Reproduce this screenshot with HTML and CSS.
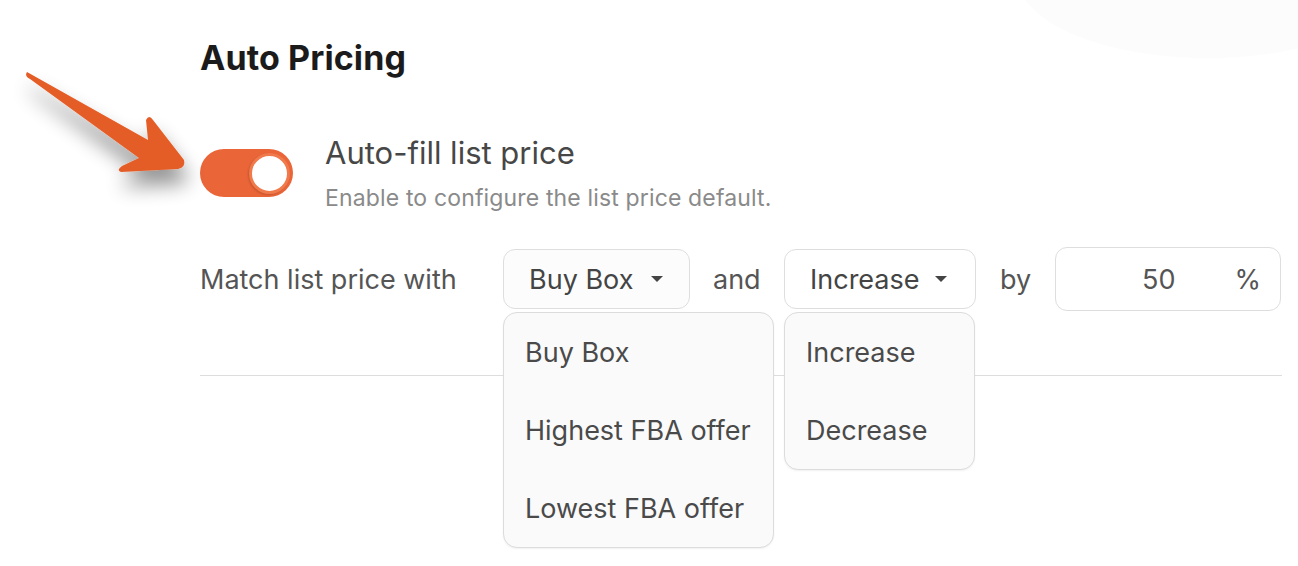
FILE: index.html
```html
<!DOCTYPE html>
<html>
<head>
<meta charset="utf-8">
<link rel="stylesheet" href="styles.css">
</head>
<body>
<div class="blob-clip"><div class="blob"></div></div>
<svg class="arrow" width="230" height="240" viewBox="0 0 230 240">
  <defs>
    <filter id="sh" x="-40%" y="-40%" width="180%" height="180%">
      <feGaussianBlur in="SourceAlpha" stdDeviation="10"/>
      <feOffset dx="3" dy="15" result="b"/>
      <feComponentTransfer><feFuncA type="linear" slope="0.42"/></feComponentTransfer>
      <feMerge><feMergeNode/><feMergeNode in="SourceGraphic"/></feMerge>
    </filter>
  </defs>
  <path filter="url(#sh)" fill="#e55d26" d="M 27 72 Q 24 76 30 79 L 139 158 L 122 166 Q 116 170 121 172 L 178 169 Q 186 167 184 160 L 153 120 Q 149 114 146 120 L 148 140 Z"/>
</svg>
<main class="page">
  <h1 class="title">Auto Pricing</h1>
  <div class="toggle-row">
    <div class="toggle"><div class="knob"></div></div>
    <div class="toggle-text">
      <div class="toggle-label">Auto-fill list price</div>
      <div class="toggle-desc">Enable to configure the list price default.</div>
    </div>
  </div>
  <div class="match-row">
    <span class="label">Match list price with</span>
    <div class="select-wrap">
      <div class="select sel-source">Buy Box <span class="caret"></span></div>
      <ul class="menu menu-source">
        <li>Buy Box</li>
        <li>Highest FBA offer</li>
        <li>Lowest FBA offer</li>
      </ul>
    </div>
    <span class="word word-and">and</span>
    <div class="select-wrap">
      <div class="select sel-dir">Increase <span class="caret"></span></div>
      <ul class="menu menu-dir">
        <li>Increase</li>
        <li>Decrease</li>
      </ul>
    </div>
    <span class="word word-by">by</span>
    <div class="amount"><span class="num">50</span><span class="pct">%</span></div>
  </div>
  <hr class="divider">
</main>
</body>
</html>
```
FILE: styles.css
```css
html {
  overflow: hidden;
}
html, body {
  margin: 0;
  padding: 0;
  background: #ffffff;
  font-family: Inter, "Noto Sans", sans-serif;
}
body {
  min-height: 566px;
}
.blob-clip {
  position: absolute;
  top: 0;
  left: 1000px;
  width: 298px;
  height: 70px;
  overflow: hidden;
}
.blob {
  width: 380px;
  height: 160px;
  margin: -102px 0 0 18px;
  border-radius: 50%;
  background: #fcfcfc;
}
.arrow {
  position: absolute;
  left: 0;
  top: 0;
  z-index: 2;
}
.page {
  position: relative;
  padding: 37px 16px 0 200px;
}
.title {
  margin: 0;
  font-size: 34px;
  font-weight: 700;
  line-height: 42px;
  color: #1b1b1b;
  letter-spacing: 0.1px;
}
.toggle-row {
  display: flex;
  gap: 32px;
  margin-top: 56px;
  align-items: flex-start;
}
.toggle {
  width: 93px;
  height: 48px;
  border-radius: 24px;
  background: #ea6538;
  display: flex;
  align-items: center;
  justify-content: flex-end;
  padding-right: 3px;
  box-sizing: border-box;
  margin-top: 14px;
  flex-shrink: 0;
}
.knob {
  width: 35px;
  height: 35px;
  border-radius: 50%;
  background: #fff;
  border: 3px solid #f07a4c;
  box-shadow: -1px 1px 2px rgba(0,0,0,0.15);
}
.toggle-label {
  font-size: 31px;
  line-height: 36px;
  color: #474747;
}
.toggle-desc {
  font-size: 23px;
  line-height: 28px;
  color: #8a8a8a;
  margin-top: 13px;
  letter-spacing: 0.15px;
}
.match-row {
  display: flex;
  align-items: center;
  margin-top: 35px;
  font-size: 27px;
  color: #555;
}
.label {
  width: 303px;
  flex-shrink: 0;
}
.select-wrap {
  position: relative;
}
.select {
  height: 60px;
  box-sizing: border-box;
  border: 1px solid #dedede;
  border-radius: 12px;
  display: flex;
  align-items: center;
  padding: 0 26px 0 25px;
  color: #444;
  background: #fff;
}
.sel-source { width: 187px; background: #fcfcfc; }
.sel-dir { width: 192px; padding-right: 28px; }
.caret {
  margin-left: auto;
  width: 0;
  height: 0;
  border-left: 6px solid transparent;
  border-right: 6px solid transparent;
  border-top: 6px solid #444;
}
.menu {
  position: absolute;
  left: 0;
  top: calc(100% + 3px);
  margin: 0;
  padding: 0;
  list-style: none;
  background: #fafafa;
  border: 1px solid #dcdcdc;
  border-radius: 14px;
  box-shadow: 0 1px 2px rgba(0,0,0,0.06);
  z-index: 3;
}
.menu li {
  height: 78px;
  display: flex;
  align-items: center;
  padding: 0 21px;
  color: #4a4a4a;
  white-space: nowrap;
}
.menu-source { width: 271px; box-sizing: border-box; }
.menu-dir { width: 191px; box-sizing: border-box; }
.word {
  color: #555;
}
.word-and {
  width: 48px;
  margin: 0 23px;
}
.word-by {
  width: 31px;
  margin-left: 24px;
}
.amount {
  width: 226px;
  height: 64px;
  margin-left: 24px;
  box-sizing: border-box;
  border: 1px solid #dedede;
  border-radius: 12px;
  display: flex;
  align-items: center;
  padding: 0 19px 0 0;
  color: #555;
  flex-shrink: 0;
}
.num {
  margin-left: 86px;
}
.pct {
  margin-left: auto;
}
.divider {
  margin: 64px 0 0 0;
  border: 0;
  height: 1px;
  background: #dddddd;
}
```
